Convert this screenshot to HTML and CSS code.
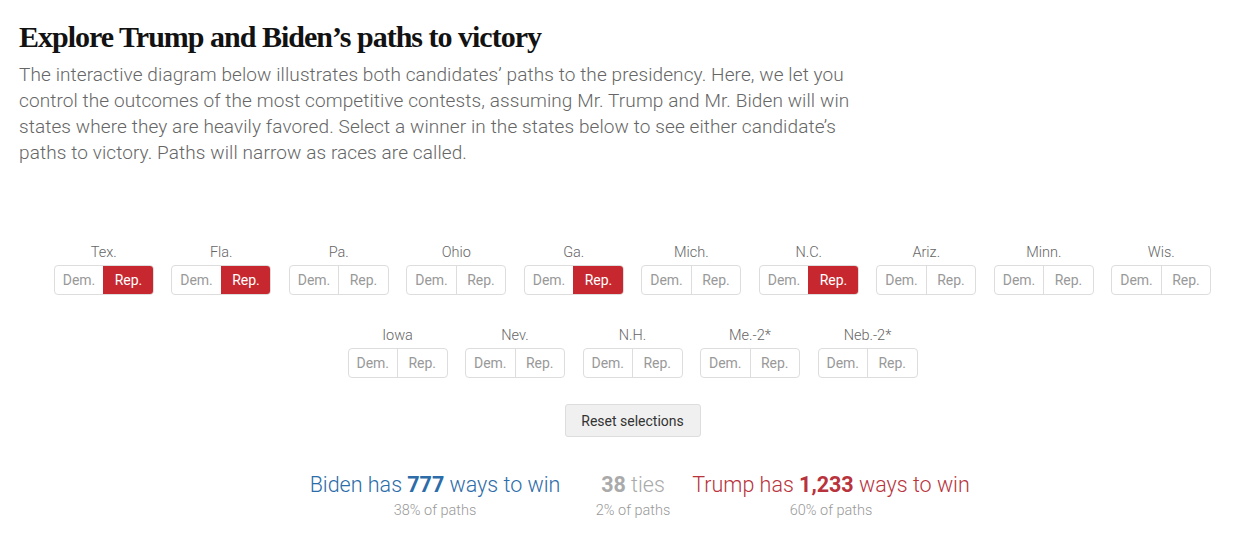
FILE: index.html
```html
<!DOCTYPE html>
<html>
<head>
<meta charset="utf-8">
<link rel="stylesheet" href="styles.css">
</head>
<body>
<div class="page">
  <h1 class="title">Explore Trump and Biden’s paths to victory</h1>
  <p class="intro">The interactive diagram below illustrates both candidates’ paths to the presidency. Here, we let you control the outcomes of the most competitive contests, assuming Mr. Trump and Mr. Biden will win states where they are heavily favored. Select a winner in the states below to see either candidate’s paths to victory. Paths will narrow as races are called.</p>

  <div class="widget">
    <div class="states">
      <div class="state"><div class="label">Tex.</div><div class="toggle"><span class="opt">Dem.</span><span class="opt rep on">Rep.</span></div></div>
      <div class="state"><div class="label">Fla.</div><div class="toggle"><span class="opt">Dem.</span><span class="opt rep on">Rep.</span></div></div>
      <div class="state"><div class="label">Pa.</div><div class="toggle"><span class="opt">Dem.</span><span class="opt rep">Rep.</span></div></div>
      <div class="state"><div class="label">Ohio</div><div class="toggle"><span class="opt">Dem.</span><span class="opt rep">Rep.</span></div></div>
      <div class="state"><div class="label">Ga.</div><div class="toggle"><span class="opt">Dem.</span><span class="opt rep on">Rep.</span></div></div>
      <div class="state"><div class="label">Mich.</div><div class="toggle"><span class="opt">Dem.</span><span class="opt rep">Rep.</span></div></div>
      <div class="state"><div class="label">N.C.</div><div class="toggle"><span class="opt">Dem.</span><span class="opt rep on">Rep.</span></div></div>
      <div class="state"><div class="label">Ariz.</div><div class="toggle"><span class="opt">Dem.</span><span class="opt rep">Rep.</span></div></div>
      <div class="state"><div class="label">Minn.</div><div class="toggle"><span class="opt">Dem.</span><span class="opt rep">Rep.</span></div></div>
      <div class="state"><div class="label">Wis.</div><div class="toggle"><span class="opt">Dem.</span><span class="opt rep">Rep.</span></div></div>
    </div>
    <div class="states row2">
      <div class="state"><div class="label">Iowa</div><div class="toggle"><span class="opt">Dem.</span><span class="opt rep">Rep.</span></div></div>
      <div class="state"><div class="label">Nev.</div><div class="toggle"><span class="opt">Dem.</span><span class="opt rep">Rep.</span></div></div>
      <div class="state"><div class="label">N.H.</div><div class="toggle"><span class="opt">Dem.</span><span class="opt rep">Rep.</span></div></div>
      <div class="state"><div class="label">Me.-2*</div><div class="toggle"><span class="opt">Dem.</span><span class="opt rep">Rep.</span></div></div>
      <div class="state"><div class="label">Neb.-2*</div><div class="toggle"><span class="opt">Dem.</span><span class="opt rep">Rep.</span></div></div>
    </div>
    <div class="reset-wrap"><button class="reset">Reset selections</button></div>
    <div class="results">
      <div class="result biden"><div class="big">Biden has <b>777</b> ways to win</div><div class="sub">38% of paths</div></div>
      <div class="result ties"><div class="big"><b>38</b> ties</div><div class="sub">2% of paths</div></div>
      <div class="result trump"><div class="big">Trump has <b>1,233</b> ways to win</div><div class="sub">60% of paths</div></div>
    </div>
  </div>
</div>
</body>
</html>
```
FILE: styles.css
```css
* { box-sizing: border-box; }
html, body { margin: 0; padding: 0; background: #fff; }
body { font-family: "Roboto", "Liberation Sans", sans-serif; color: #333; }
.page { padding: 19px 0 0 19px; width: 1241px; }
.title {
  margin: 0;
  font-family: "Liberation Serif", "DejaVu Serif", serif;
  font-weight: 700;
  font-size: 30px;
  line-height: 36px;
  letter-spacing: -1px;
  color: #121212;
}
.intro {
  margin: 7px 0 0;
  width: 840px;
  font-weight: 300;
  font-size: 19px;
  line-height: 26px;
  letter-spacing: 0.1px;
  color: #666;
}
.widget { margin-top: 78px; padding-left: 5px; }
.states { display: flex; justify-content: center; gap: 17.5px; }
.row2 { margin-top: 32px; }
.state { display: flex; flex-direction: column; align-items: center; width: 100px; }
.label { font-size: 14.5px; font-weight: 300; color: #666; line-height: 17px; height: 21px; }
.toggle { display: flex; width: 100px; height: 30px; border: 1px solid #ddd; border-radius: 4px; overflow: hidden; }
.opt { flex: 1; display: flex; align-items: center; justify-content: center; font-size: 14px; color: #999; font-weight: 400; }
.opt.rep { border-left: 1px solid #ddd; }
.opt.on { background: #c7282f; color: #fff; border-left-color: #c7282f; }
.reset-wrap { display: flex; justify-content: center; margin-top: 26px; }
.reset {
  font-family: "Roboto", "Liberation Sans", sans-serif;
  font-size: 14px; color: #333; font-weight: 400;
  background: #f0f0f0; border: 1px solid #ddd; border-radius: 3px;
  width: 136px; height: 33px; padding: 0;
}
.results { display: grid; grid-template-columns: repeat(3, 198px); justify-content: center; margin-top: 34px; padding-left: 1px; }
.result { display: flex; flex-direction: column; align-items: center; white-space: nowrap; }
.big { font-size: 21.5px; font-weight: 300; line-height: 28px; }
.big b { font-weight: 700; }
.sub { font-size: 14.5px; font-weight: 300; color: #999; line-height: 20px; margin-top: 2px; }
.biden .big { color: #2c6ca8; }
.ties .big { color: #aaa; }
.trump .big { color: #b8333c; }
```
